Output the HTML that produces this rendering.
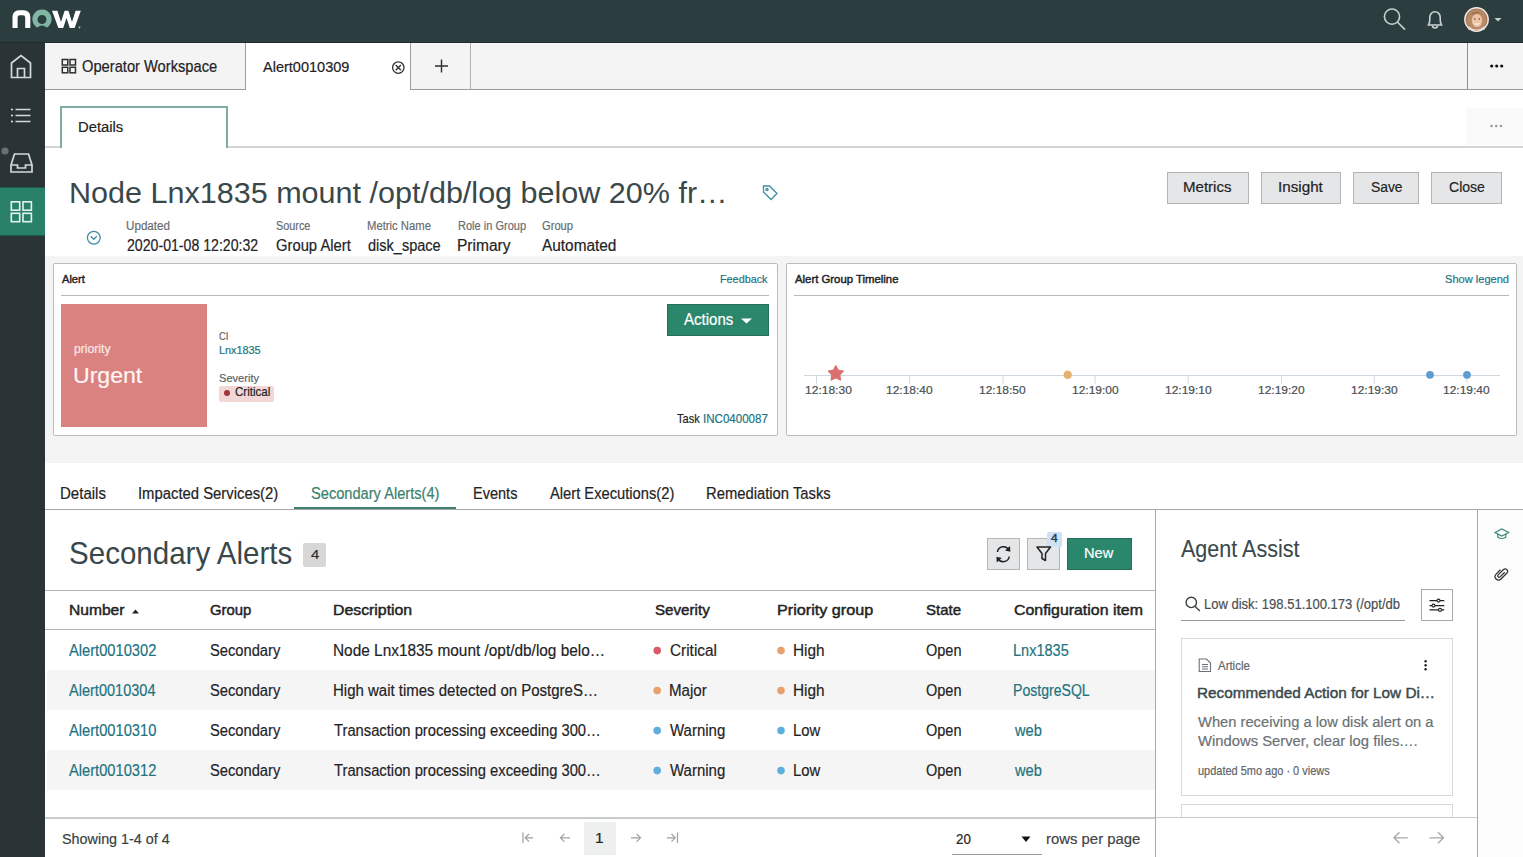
<!DOCTYPE html>
<html><head><meta charset="utf-8">
<style>
html,body{margin:0;padding:0;}
body{width:1523px;height:857px;overflow:hidden;position:relative;background:#fff;font-family:"Liberation Sans",sans-serif;}
.a{position:absolute;box-sizing:border-box;}
.t{position:absolute;white-space:nowrap;transform-origin:0 0;font-family:"Liberation Sans",sans-serif;}
svg{position:absolute;overflow:visible;}
</style></head><body>
<!-- header -->
<div class="a" style="left:0;top:0;width:1523px;height:42px;background:#2c3d3f"></div>
<div class="a" style="left:0;top:42px;width:1523px;height:1px;background:#1f2b2d"></div>
<!-- sidebar -->
<div class="a" style="left:0;top:43px;width:45px;height:814px;background:#2a3336"></div>
<div class="a" style="left:0;top:187px;width:45px;height:49px;background:#288068;border-top:1px solid #1d5a4b;border-bottom:1px solid #1d5a4b"></div>
<!-- tab bar -->
<div class="a" style="left:45px;top:43px;width:1478px;height:47px;background:#f4f4f4;border-bottom:1px solid #9a9a9a"></div>
<div class="a" style="left:245px;top:43px;width:166px;height:47px;background:#fff;border-left:1px solid #9e9e9e;border-right:1px solid #9e9e9e"></div>
<div class="a" style="left:470px;top:43px;width:1px;height:46px;background:#b0b0b0"></div>
<div class="a" style="left:1467px;top:43px;width:1px;height:46px;background:#8e8e8e"></div>
<!-- subtab -->
<div class="a" style="left:45px;top:146px;width:1478px;height:2px;background:#d4d4d4"></div>
<div class="a" style="left:60px;top:106px;width:168px;height:42px;background:#fff;border:2px solid #80aca4;border-bottom:none"></div>
<div class="a" style="left:1466px;top:108px;width:57px;height:37px;background:#fafafa"></div>
<!-- buttons -->
<div class="a" style="left:1167px;top:172px;width:82px;height:32px;background:#e4e6e7;border:1px solid #b4b4b4"></div>
<div class="a" style="left:1261px;top:172px;width:80px;height:32px;background:#e4e6e7;border:1px solid #b4b4b4"></div>
<div class="a" style="left:1353px;top:172px;width:66px;height:32px;background:#e4e6e7;border:1px solid #b4b4b4"></div>
<div class="a" style="left:1431px;top:172px;width:71px;height:32px;background:#e4e6e7;border:1px solid #b4b4b4"></div>
<!-- gray band -->
<div class="a" style="left:45px;top:256px;width:1478px;height:207px;background:#f4f4f4"></div>
<div class="a" style="left:53px;top:263px;width:725px;height:173px;background:#fff;border:1px solid #bcbcbc;border-radius:2px"></div>
<div class="a" style="left:61px;top:295px;width:708px;height:1px;background:#b9b9b9"></div>
<div class="a" style="left:786px;top:263px;width:731px;height:173px;background:#fff;border:1px solid #bcbcbc;border-radius:2px"></div>
<div class="a" style="left:794px;top:295px;width:715px;height:1px;background:#b9b9b9"></div>
<div class="a" style="left:61px;top:304px;width:146px;height:123px;background:#d9827f"></div>
<div class="a" style="left:219px;top:386px;width:55px;height:16px;background:#f3d6d6;border-radius:2px"></div>
<div class="a" style="left:224px;top:390px;width:6px;height:6px;background:#a3343a;border-radius:50%"></div>
<div class="a" style="left:667px;top:304px;width:102px;height:32px;background:#2b876c;border:1px solid #236f59"></div>
<svg style="left:0;top:0" width="1" height="1"><path d="M741 318.5 L752 318.5 L746.5 323.5 Z" fill="#fff"/></svg>
<!-- timeline -->
<div class="a" style="left:804px;top:375px;width:696px;height:1px;background:#cfd8e0"></div>
<div id="ticks"></div>
<!-- tabs row -->
<div class="a" style="left:45px;top:509px;width:1478px;height:1px;background:#a8a8a8"></div>
<div class="a" style="left:294px;top:507px;width:162px;height:2px;background:#3f7f70"></div>
<!-- panels -->
<div class="a" style="left:1155px;top:510px;width:1px;height:347px;background:#a9a9a9"></div>
<div class="a" style="left:1477px;top:510px;width:1px;height:347px;background:#a9a9a9"></div>
<div class="a" style="left:1478px;top:510px;width:45px;height:347px;background:#fcfcfc"></div>
<div class="a" style="left:303px;top:543px;width:23px;height:24px;background:#d7d7d7;border-radius:2px"></div>
<div class="a" style="left:987px;top:538px;width:33px;height:32px;background:#e4e6e7;border:1px solid #b4b4b4"></div>
<div class="a" style="left:1027px;top:538px;width:33px;height:32px;background:#e4e6e7;border:1px solid #b4b4b4"></div>
<div class="a" style="left:1047px;top:532px;width:15px;height:15px;background:#cde2f3;border-radius:2px"></div>
<div class="a" style="left:1067px;top:538px;width:65px;height:32px;background:#2b876c;border:1px solid #236f59"></div>
<!-- table -->
<div class="a" style="left:45px;top:590px;width:1110px;height:1px;background:#b5b5b5"></div>
<div class="a" style="left:45px;top:629px;width:1110px;height:1px;background:#b5b5b5"></div>
<div class="a" style="left:47px;top:670px;width:1108px;height:40px;background:#f5f5f5"></div>
<div class="a" style="left:47px;top:750px;width:1108px;height:40px;background:#f5f5f5"></div>
<svg style="left:0;top:0" width="1" height="1"><path d="M132 613.5 L139 613.5 L135.5 609.5 Z" fill="#222"/></svg>
<div id="dots"></div>
<!-- footer -->
<div class="a" style="left:45px;top:817px;width:1110px;height:2px;background:#c9cccc"></div>
<div class="a" style="left:584px;top:822px;width:32px;height:33px;background:#eef0f0"></div>
<div class="a" style="left:952px;top:854px;width:90px;height:1px;background:#9a9a9a"></div>
<svg style="left:0;top:0" width="1" height="1"><path d="M1021.5 836.5 L1030.5 836.5 L1026 842 Z" fill="#111"/></svg>
<!-- agent assist -->
<div class="a" style="left:1181px;top:620px;width:224px;height:1px;background:#9a9a9a"></div>
<div class="a" style="left:1421px;top:589px;width:32px;height:32px;background:#fff;border:1px solid #a9a9a9"></div>
<div class="a" style="left:1181px;top:638px;width:272px;height:158px;background:#fff;border:1px solid #d9d9d9"></div>
<div class="a" style="left:1181px;top:804px;width:272px;height:20px;background:#fff;border:1px solid #d9d9d9;border-bottom:none"></div>
<div class="a" style="left:1156px;top:817px;width:321px;height:40px;background:#fff;border-top:1px solid #c9cccc"></div>
<svg style="left:0;top:0" width="1523" height="857" viewBox="0 0 1523 857">
<!-- logo now -->
<g fill="#ffffff">
<path d="M12.5 28 V16.5 A6.3 6.3 0 0 1 18.8 10.2 H24 A6.3 6.3 0 0 1 30.3 16.5 V28 H25.2 V17.5 A2.2 2.2 0 0 0 23 15.3 H19.8 A2.2 2.2 0 0 0 17.6 17.5 V28 Z"/>
<path d="M52 10.8 H57.4 L61 22 L64.6 10.8 H68.4 L72 22 L75.6 10.8 H80.8 L74.6 28 H69.8 L66.5 18 L63.2 28 H58.4 Z"/>
</g>
<path fill-rule="evenodd" d="M37.4 27.6 A9.6 9.6 0 1 1 46.6 27.6 Q42 23.6 37.4 27.6 Z M42 15 A4.5 4.5 0 1 0 42 24 A4.5 4.5 0 1 0 42 15 Z" fill="#81b6a2"/>
<path d="M78.5 27 h2 M79.5 27 v1.5" stroke="#fff" stroke-width="0.6"/>
<!-- search -->
<g fill="none" stroke="#c9d1d2" stroke-width="1.6">
<circle cx="1392" cy="16.6" r="7.6"/>
<path d="M1397.6 22.2 L1405 29.6"/>
<!-- bell -->
<path d="M1428.5 25 C1429.5 23.5 1429.8 21.5 1429.8 19 V17 A5.2 5.2 0 0 1 1440.2 17 V19 C1440.2 21.5 1440.5 23.5 1441.5 25 Z"/>
<path d="M1432.5 25.5 A2.5 2.5 0 0 0 1437.5 25.5"/>
</g>
<!-- avatar -->
<circle cx="1476.5" cy="19.5" r="12.4" fill="#f2ece8"/>
<circle cx="1476.5" cy="19.5" r="10.9" fill="#a8795a"/>
<path d="M1467 22 Q1466 10 1476.5 9.5 Q1487 10 1486 22 Q1484 28 1476.5 30 Q1469 28 1467 22Z" fill="#b98a66"/>
<ellipse cx="1477" cy="20.5" rx="5.2" ry="6.6" fill="#eec3a8"/>
<path d="M1470 15.5 Q1476 9 1483.5 15 Q1480 12.5 1476.5 13 Q1472.5 13 1470 15.5Z" fill="#8e5e40"/>
<path d="M1468.5 26 Q1476.5 33 1484.5 26 L1484.5 30 L1468.5 30Z" fill="#e9d8cf"/>
<circle cx="1474.8" cy="19" r="0.7" fill="#4a2a1a"/><circle cx="1479.2" cy="19" r="0.7" fill="#4a2a1a"/>
<path d="M1474.5 23.5 Q1477 25.2 1479.5 23.5" stroke="#fff" stroke-width="1" fill="none"/>
<path d="M1494.5 18 L1501.5 18 L1498 21.5 Z" fill="#c9d1d2"/>
<!-- sidebar icons -->
<g fill="none" stroke="#d4d9da" stroke-width="1.7">
<path d="M11.5 77.5 V63 L21 55.5 L30.5 63 V77.5 Z"/>
<path d="M17.5 77.5 V68.5 H24.5 V77.5"/>
<path d="M15.5 109.5 H30.5 M15.5 115.5 H30.5 M15.5 121.5 H30.5"/>
<path d="M11 165 L14.5 154 H28.5 L32 165 V172 H11 Z M11 165 H17.5 V168 H25.5 V165 H32"/>
</g>
<g fill="#d4d9da"><circle cx="12" cy="109.5" r="1.1"/><circle cx="12" cy="115.5" r="1.1"/><circle cx="12" cy="121.5" r="1.1"/></g>
<circle cx="5" cy="151" r="3.6" fill="#6a6f71"/>
<g fill="none" stroke="#e3f3ee" stroke-width="1.6">
<rect x="11.3" y="201.8" width="8.4" height="8.4"/><rect x="23" y="201.8" width="8.4" height="8.4"/>
<rect x="11.3" y="213.3" width="8.4" height="8.4"/><rect x="23" y="213.3" width="8.4" height="8.4"/>
</g>
<!-- tab grid icon -->
<g fill="none" stroke="#2b2f31" stroke-width="1.5">
<rect x="62.3" y="59.5" width="5.5" height="5.5"/><rect x="70" y="59.5" width="5.5" height="5.5"/>
<rect x="62.3" y="67.3" width="5.5" height="5.5"/><rect x="70" y="67.3" width="5.5" height="5.5"/>
</g>
<!-- close circle x -->
<g fill="none" stroke="#2b2f31" stroke-width="1.3">
<circle cx="398.3" cy="67.6" r="5.7"/>
<path d="M395.7 65 L400.9 70.2 M400.9 65 L395.7 70.2"/>
<!-- plus -->
<path d="M441.5 59.5 V72.5 M435 66 H448" stroke-width="1.4"/>
</g>
<g fill="#111"><circle cx="1491.7" cy="66" r="1.6"/><circle cx="1496.7" cy="66" r="1.6"/><circle cx="1501.7" cy="66" r="1.6"/></g>
<g fill="#9a9a9a"><circle cx="1491.5" cy="126" r="1.3"/><circle cx="1496.2" cy="126" r="1.3"/><circle cx="1500.9" cy="126" r="1.3"/></g>
<!-- chevron circle -->
<g fill="none" stroke="#3c8ea0" stroke-width="1.3">
<circle cx="93.8" cy="237.8" r="6.4"/>
<path d="M90.8 236.3 L93.8 239.3 L96.8 236.3"/>
<!-- tag -->
<path d="M763.5 186 H769.5 L777 193.5 L771 199.5 L763.5 192 Z"/>
<circle cx="767" cy="189.5" r="1.1"/>
</g>
<!-- timeline ticks -->
<g stroke="#cfd8e0" stroke-width="1">
<path d="M816.5 375 V383.5 M909.7 375 V383.5 M1003 375 V383.5 M1095.1 375 V383.5 M1188.2 375 V383.5 M1281.6 375 V383.5 M1374.3 375 V383.5 M1467 375 V383.5"/>
</g>
<path d="M835.80 365.40 L838.33 370.12 L843.60 371.07 L839.89 374.93 L840.62 380.23 L835.80 377.90 L830.98 380.23 L831.71 374.93 L828.00 371.07 L833.27 370.12 Z" fill="#d9706e" stroke="#d9706e" stroke-width="1" stroke-linejoin="round"/>
<circle cx="1067.7" cy="374.8" r="4.2" fill="#e6b26f"/>
<circle cx="1430" cy="374.8" r="3.9" fill="#5e9dd2"/>
<circle cx="1467" cy="374.8" r="3.9" fill="#5e9dd2"/>
<!-- refresh icon -->
<g fill="none" stroke="#222" stroke-width="1.5">
<path d="M997.5 552 A6 6 0 0 1 1008.8 550"/>
<path d="M1009.2 556.5 A6 6 0 0 1 998 558.6"/>
</g>
<path d="M1010 546 L1010.4 551.8 L1005 550.6 Z" fill="#222"/>
<path d="M996.8 562.6 L996.4 556.8 L1001.8 558 Z" fill="#222"/>
<!-- filter -->
<path d="M1037 547 H1050.5 L1045.5 553.5 V560.5 L1042 558.5 V553.5 Z" fill="none" stroke="#222" stroke-width="1.5" stroke-linejoin="round"/>
<!-- table dots -->
<g>
<circle cx="657.2" cy="650.6" r="3.8" fill="#d95a68"/>
<circle cx="657.2" cy="690.6" r="3.8" fill="#e8a06c"/>
<circle cx="657.2" cy="730.6" r="3.8" fill="#5eaede"/>
<circle cx="657.2" cy="770.6" r="3.8" fill="#5eaede"/>
<circle cx="781" cy="650.6" r="3.8" fill="#e8a06c"/>
<circle cx="781" cy="690.6" r="3.8" fill="#e8a06c"/>
<circle cx="781" cy="730.6" r="3.8" fill="#5eaede"/>
<circle cx="781" cy="770.6" r="3.8" fill="#5eaede"/>
</g>
<!-- pagination arrows -->
<g fill="none" stroke="#9ba0a3" stroke-width="1.2">
<path d="M523 832.5 V843 M533 837.8 H525.5 M529 834 L525.3 837.8 L529 841.6"/>
<path d="M570 837.8 H560.5 M564.5 833.8 L560.5 837.8 L564.5 841.8"/>
<path d="M631 837.8 H640.5 M636.5 833.8 L640.5 837.8 L636.5 841.8"/>
<path d="M677.5 832.5 V843 M667 837.8 H675 M671.5 834 L675.2 837.8 L671.5 841.6"/>
</g>
<!-- agent assist search -->
<g fill="none" stroke="#3a3f42" stroke-width="1.4">
<circle cx="1191.3" cy="602.4" r="5.2"/>
<path d="M1195 606.2 L1199.8 611"/>
</g>
<g fill="none" stroke="#222" stroke-width="1.3">
<path d="M1429.5 600.6 H1444.3 M1429.5 605.6 H1444.3 M1429.5 609.9 H1444.3"/>
</g>
<g fill="#fff" stroke="#222" stroke-width="1.1">
<circle cx="1438.5" cy="600.6" r="1.5"/><circle cx="1433.5" cy="605.6" r="1.5"/><circle cx="1440" cy="609.9" r="1.5"/>
</g>
<!-- doc icon -->
<g fill="none" stroke="#6b7174" stroke-width="1.1">
<path d="M1199.2 659 H1206.5 L1210.5 663 V671.5 H1199.2 Z"/>
<path d="M1202 664.5 H1208 M1202 666.8 H1208 M1202 669 H1208"/>
</g>
<g fill="#222"><circle cx="1425.6" cy="661.2" r="1.2"/><circle cx="1425.6" cy="665.2" r="1.2"/><circle cx="1425.6" cy="669.2" r="1.2"/></g>
<!-- agent assist arrows -->
<g fill="none" stroke="#a3a7aa" stroke-width="1.3">
<path d="M1407.8 837.8 H1394 M1399.5 832.3 L1394 837.8 L1399.5 843.3"/>
<path d="M1429.5 837.8 H1443.5 M1438 832.3 L1443.5 837.8 L1438 843.3"/>
</g>
<!-- grad cap -->
<g fill="none" stroke="#3a8a7a" stroke-width="1.2">
<path d="M1495 532.5 L1501.8 529 L1508.6 532.5 L1501.8 536 Z"/>
<path d="M1497.8 534 V537.2 Q1501.8 539.8 1505.8 537.2 V534"/>
</g>
<!-- paperclip -->
<path d="M1505.5 569.5 L1499 576 A1.9 1.9 0 0 1 1496.3 573.3 L1503.8 565.8 A3.4 3.4 0 0 1 1508.6 570.6 L1500.3 578.9 A4.8 4.8 0 0 1 1493.5 572.1 L1499.5 566.1" fill="none" stroke="#2b2f31" transform="translate(1501.5 574) scale(0.72) translate(-1501 -572)" stroke-width="1.7"/>
</svg>

<span class="t" id="t0" style="left:81.60px;top:56.8px;font-size:15.75px;line-height:19px;color:#1f2325;font-weight:normal;transform:scaleX(0.9321);-webkit-text-stroke:0.2px #1f2325">Operator Workspace</span>
<span class="t" id="t1" style="left:262.80px;top:57.5px;font-size:15.25px;line-height:18px;color:#1f2325;font-weight:normal;transform:scaleX(0.9519);-webkit-text-stroke:0.2px #1f2325">Alert0010309</span>
<span class="t" id="t2" style="left:77.53px;top:117.5px;font-size:15.25px;line-height:18px;color:#1f2325;font-weight:normal;transform:scaleX(0.9698);-webkit-text-stroke:0.2px #1f2325">Details</span>
<span class="t" id="t3" style="left:68.75px;top:174.5px;font-size:29.75px;line-height:36px;color:#3a484b;font-weight:normal;transform:scaleX(1.0264);-webkit-text-stroke:0px #3a484b">Node Lnx1835 mount /opt/db/log below 20% fr…</span>
<span class="t" id="t4" style="left:126.32px;top:218.3px;font-size:13.25px;line-height:16px;color:#676d70;font-weight:normal;transform:scaleX(0.8784);-webkit-text-stroke:0.2px #676d70">Updated</span>
<span class="t" id="t5" style="left:275.50px;top:218.3px;font-size:13.25px;line-height:16px;color:#676d70;font-weight:normal;transform:scaleX(0.8195);-webkit-text-stroke:0.2px #676d70">Source</span>
<span class="t" id="t6" style="left:367.15px;top:218.3px;font-size:13.25px;line-height:16px;color:#676d70;font-weight:normal;transform:scaleX(0.8518);-webkit-text-stroke:0.2px #676d70">Metric Name</span>
<span class="t" id="t7" style="left:457.57px;top:218.3px;font-size:13.25px;line-height:16px;color:#676d70;font-weight:normal;transform:scaleX(0.8323);-webkit-text-stroke:0.2px #676d70">Role in Group</span>
<span class="t" id="t8" style="left:541.80px;top:218.3px;font-size:13.25px;line-height:16px;color:#676d70;font-weight:normal;transform:scaleX(0.8421);-webkit-text-stroke:0.2px #676d70">Group</span>
<span class="t" id="t9" style="left:127.20px;top:236.0px;font-size:16.0px;line-height:19px;color:#1f2325;font-weight:normal;transform:scaleX(0.8832);-webkit-text-stroke:0.2px #1f2325">2020-01-08 12:20:32</span>
<span class="t" id="t10" style="left:275.50px;top:236.0px;font-size:16.0px;line-height:19px;color:#1f2325;font-weight:normal;transform:scaleX(0.9239);-webkit-text-stroke:0.2px #1f2325">Group Alert</span>
<span class="t" id="t11" style="left:368.00px;top:236.0px;font-size:16.0px;line-height:19px;color:#1f2325;font-weight:normal;transform:scaleX(0.9083);-webkit-text-stroke:0.2px #1f2325">disk_space</span>
<span class="t" id="t12" style="left:457.43px;top:236.0px;font-size:16.0px;line-height:19px;color:#1f2325;font-weight:normal;transform:scaleX(0.9703);-webkit-text-stroke:0.2px #1f2325">Primary</span>
<span class="t" id="t13" style="left:541.80px;top:236.0px;font-size:16.0px;line-height:19px;color:#1f2325;font-weight:normal;transform:scaleX(0.9610);-webkit-text-stroke:0.2px #1f2325">Automated</span>
<span class="t" id="t14" style="left:1183.21px;top:177.7px;font-size:15.25px;line-height:18px;color:#1f2325;font-weight:normal;transform:scaleX(0.9874);-webkit-text-stroke:0.2px #1f2325">Metrics</span>
<span class="t" id="t15" style="left:1278.40px;top:177.7px;font-size:15.25px;line-height:18px;color:#1f2325;font-weight:normal;transform:scaleX(0.9979);-webkit-text-stroke:0.2px #1f2325">Insight</span>
<span class="t" id="t16" style="left:1370.80px;top:177.7px;font-size:15.25px;line-height:18px;color:#1f2325;font-weight:normal;transform:scaleX(0.9073);-webkit-text-stroke:0.2px #1f2325">Save</span>
<span class="t" id="t17" style="left:1448.80px;top:177.7px;font-size:15.25px;line-height:18px;color:#1f2325;font-weight:normal;transform:scaleX(0.9219);-webkit-text-stroke:0.2px #1f2325">Close</span>
<span class="t" id="t18" style="left:62.00px;top:272.2px;font-size:11.5px;line-height:14px;color:#1f2325;font-weight:normal;transform:scaleX(0.9652);-webkit-text-stroke:0.45px #1f2325">Alert</span>
<span class="t" id="t19" style="left:720.40px;top:272.0px;font-size:11.75px;line-height:14px;color:#21737f;font-weight:normal;transform:scaleX(0.9202);-webkit-text-stroke:0.2px #21737f">Feedback</span>
<span class="t" id="t20" style="left:794.60px;top:272.2px;font-size:11.25px;line-height:14px;color:#1f2325;font-weight:normal;transform:scaleX(1.0089);-webkit-text-stroke:0.45px #1f2325">Alert Group Timeline</span>
<span class="t" id="t21" style="left:1444.70px;top:272.0px;font-size:11.75px;line-height:14px;color:#21737f;font-weight:normal;transform:scaleX(0.9420);-webkit-text-stroke:0.2px #21737f">Show legend</span>
<span class="t" id="t22" style="left:73.70px;top:341.6px;font-size:12.5px;line-height:15px;color:#fbe9e8;font-weight:normal;transform:scaleX(0.9724);-webkit-text-stroke:0.2px #fbe9e8">priority</span>
<span class="t" id="t23" style="left:72.67px;top:362.0px;font-size:22.5px;line-height:27px;color:#fff5f4;font-weight:normal;transform:scaleX(1.0255);-webkit-text-stroke:0.2px #fff5f4">Urgent</span>
<span class="t" id="t24" style="left:219.20px;top:329.5px;font-size:11.0px;line-height:13px;color:#5f6467;font-weight:normal;transform:scaleX(0.8498);-webkit-text-stroke:0.2px #5f6467">CI</span>
<span class="t" id="t25" style="left:219.20px;top:343.9px;font-size:11.0px;line-height:13px;color:#21737f;font-weight:normal;transform:scaleX(0.9860);-webkit-text-stroke:0.2px #21737f">Lnx1835</span>
<span class="t" id="t26" style="left:219.20px;top:370.6px;font-size:11.5px;line-height:14px;color:#5f6467;font-weight:normal;transform:scaleX(0.9643);-webkit-text-stroke:0.2px #5f6467">Severity</span>
<span class="t" id="t27" style="left:235.30px;top:385.3px;font-size:12.25px;line-height:15px;color:#1f2325;font-weight:normal;transform:scaleX(0.9452);-webkit-text-stroke:0.2px #1f2325">Critical</span>
<span class="t" id="t28" style="left:683.60px;top:310.1px;font-size:15.75px;line-height:19px;color:#ffffff;font-weight:normal;transform:scaleX(0.9541);-webkit-text-stroke:0.2px #ffffff">Actions</span>
<span class="t" id="t29" style="left:677.30px;top:410.9px;font-size:13.0px;line-height:16px;color:#1f2325;font-weight:normal;transform:scaleX(0.8483);-webkit-text-stroke:0.2px #1f2325">Task</span>
<span class="t" id="t30" style="left:703.31px;top:410.9px;font-size:13.0px;line-height:16px;color:#21737f;font-weight:normal;transform:scaleX(0.8890);-webkit-text-stroke:0.2px #21737f">INC0400087</span>
<span class="t" id="t31" style="left:805.10px;top:383.4px;font-size:11.75px;line-height:14px;color:#4a4f52;font-weight:normal;transform:scaleX(1.0237);-webkit-text-stroke:0.2px #4a4f52">12:18:30</span>
<span class="t" id="t32" style="left:886.10px;top:383.4px;font-size:11.75px;line-height:14px;color:#4a4f52;font-weight:normal;transform:scaleX(1.0216);-webkit-text-stroke:0.2px #4a4f52">12:18:40</span>
<span class="t" id="t33" style="left:979.40px;top:383.4px;font-size:11.75px;line-height:14px;color:#4a4f52;font-weight:normal;transform:scaleX(1.0216);-webkit-text-stroke:0.2px #4a4f52">12:18:50</span>
<span class="t" id="t34" style="left:1071.50px;top:383.4px;font-size:11.75px;line-height:14px;color:#4a4f52;font-weight:normal;transform:scaleX(1.0216);-webkit-text-stroke:0.2px #4a4f52">12:19:00</span>
<span class="t" id="t35" style="left:1164.60px;top:383.4px;font-size:11.75px;line-height:14px;color:#4a4f52;font-weight:normal;transform:scaleX(1.0216);-webkit-text-stroke:0.2px #4a4f52">12:19:10</span>
<span class="t" id="t36" style="left:1258.00px;top:383.4px;font-size:11.75px;line-height:14px;color:#4a4f52;font-weight:normal;transform:scaleX(1.0216);-webkit-text-stroke:0.2px #4a4f52">12:19:20</span>
<span class="t" id="t37" style="left:1350.70px;top:383.4px;font-size:11.75px;line-height:14px;color:#4a4f52;font-weight:normal;transform:scaleX(1.0216);-webkit-text-stroke:0.2px #4a4f52">12:19:30</span>
<span class="t" id="t38" style="left:1443.40px;top:383.4px;font-size:11.75px;line-height:14px;color:#4a4f52;font-weight:normal;transform:scaleX(1.0216);-webkit-text-stroke:0.2px #4a4f52">12:19:40</span>
<span class="t" id="t39" style="left:60.38px;top:482.7px;font-size:16.25px;line-height:20px;color:#1f2325;font-weight:normal;transform:scaleX(0.9249);-webkit-text-stroke:0.2px #1f2325">Details</span>
<span class="t" id="t40" style="left:137.79px;top:482.7px;font-size:16.25px;line-height:20px;color:#1f2325;font-weight:normal;transform:scaleX(0.9131);-webkit-text-stroke:0.2px #1f2325">Impacted Services(2)</span>
<span class="t" id="t41" style="left:310.90px;top:482.7px;font-size:16.25px;line-height:20px;color:#3b7f6e;font-weight:normal;transform:scaleX(0.9002);-webkit-text-stroke:0.2px #3b7f6e">Secondary Alerts(4)</span>
<span class="t" id="t42" style="left:472.61px;top:482.7px;font-size:16.25px;line-height:20px;color:#1f2325;font-weight:normal;transform:scaleX(0.8939);-webkit-text-stroke:0.2px #1f2325">Events</span>
<span class="t" id="t43" style="left:549.50px;top:482.7px;font-size:16.25px;line-height:20px;color:#1f2325;font-weight:normal;transform:scaleX(0.9053);-webkit-text-stroke:0.2px #1f2325">Alert Executions(2)</span>
<span class="t" id="t44" style="left:706.09px;top:482.7px;font-size:16.25px;line-height:20px;color:#1f2325;font-weight:normal;transform:scaleX(0.9107);-webkit-text-stroke:0.2px #1f2325">Remediation Tasks</span>
<span class="t" id="t45" style="left:69.25px;top:534.8px;font-size:31.25px;line-height:38px;color:#3a484b;font-weight:normal;transform:scaleX(0.9453);-webkit-text-stroke:0px #3a484b">Secondary Alerts</span>
<span class="t" id="t46" style="left:310.50px;top:547.0px;font-size:13.0px;line-height:16px;color:#2b2b2b;font-weight:normal;transform:scaleX(1.1429);-webkit-text-stroke:0.2px #2b2b2b">4</span>
<span class="t" id="t47" style="left:1084.26px;top:543.2px;font-size:15.5px;line-height:19px;color:#ffffff;font-weight:normal;transform:scaleX(0.9411);-webkit-text-stroke:0.2px #ffffff">New</span>
<span class="t" id="t48" style="left:1051.00px;top:532.2px;font-size:11.0px;line-height:13px;color:#1d3f66;font-weight:normal;transform:scaleX(1.0833);-webkit-text-stroke:0.45px #1d3f66">4</span>
<span class="t" id="t49" style="left:69.12px;top:601.9px;font-size:14.5px;line-height:17px;color:#1f2325;font-weight:normal;transform:scaleX(1.0760);-webkit-text-stroke:0.45px #1f2325">Number</span>
<span class="t" id="t50" style="left:210.10px;top:601.9px;font-size:14.5px;line-height:17px;color:#1f2325;font-weight:normal;transform:scaleX(1.0265);-webkit-text-stroke:0.45px #1f2325">Group</span>
<span class="t" id="t51" style="left:332.81px;top:601.9px;font-size:14.5px;line-height:17px;color:#1f2325;font-weight:normal;transform:scaleX(1.0915);-webkit-text-stroke:0.45px #1f2325">Description</span>
<span class="t" id="t52" style="left:654.50px;top:601.9px;font-size:14.5px;line-height:17px;color:#1f2325;font-weight:normal;transform:scaleX(1.0446);-webkit-text-stroke:0.45px #1f2325">Severity</span>
<span class="t" id="t53" style="left:776.78px;top:601.9px;font-size:14.5px;line-height:17px;color:#1f2325;font-weight:normal;transform:scaleX(1.1155);-webkit-text-stroke:0.45px #1f2325">Priority group</span>
<span class="t" id="t54" style="left:926.00px;top:601.9px;font-size:14.5px;line-height:17px;color:#1f2325;font-weight:normal;transform:scaleX(1.0328);-webkit-text-stroke:0.45px #1f2325">State</span>
<span class="t" id="t55" style="left:1014.20px;top:601.9px;font-size:14.5px;line-height:17px;color:#1f2325;font-weight:normal;transform:scaleX(1.0953);-webkit-text-stroke:0.45px #1f2325">Configuration item</span>
<span class="t" id="t56" style="left:69.00px;top:639.7px;font-size:17.25px;line-height:21px;color:#21737f;font-weight:normal;transform:scaleX(0.8507);-webkit-text-stroke:0.2px #21737f">Alert0010302</span>
<span class="t" id="t57" style="left:209.70px;top:639.7px;font-size:17.25px;line-height:21px;color:#1f2325;font-weight:normal;transform:scaleX(0.8522);-webkit-text-stroke:0.2px #1f2325">Secondary</span>
<span class="t" id="t58" style="left:333.01px;top:639.7px;font-size:17.25px;line-height:21px;color:#1f2325;font-weight:normal;transform:scaleX(0.8926);-webkit-text-stroke:0.2px #1f2325">Node Lnx1835 mount /opt/db/log belo…</span>
<span class="t" id="t59" style="left:670.30px;top:639.7px;font-size:17.25px;line-height:21px;color:#1f2325;font-weight:normal;transform:scaleX(0.8906);-webkit-text-stroke:0.2px #1f2325">Critical</span>
<span class="t" id="t60" style="left:792.71px;top:639.7px;font-size:17.25px;line-height:21px;color:#1f2325;font-weight:normal;transform:scaleX(0.8913);-webkit-text-stroke:0.2px #1f2325">High</span>
<span class="t" id="t61" style="left:926.00px;top:639.7px;font-size:17.25px;line-height:21px;color:#1f2325;font-weight:normal;transform:scaleX(0.8412);-webkit-text-stroke:0.2px #1f2325">Open</span>
<span class="t" id="t62" style="left:1013.36px;top:639.7px;font-size:17.25px;line-height:21px;color:#21737f;font-weight:normal;transform:scaleX(0.8422);-webkit-text-stroke:0.2px #21737f">Lnx1835</span>
<span class="t" id="t63" style="left:69.00px;top:679.7px;font-size:17.25px;line-height:21px;color:#21737f;font-weight:normal;transform:scaleX(0.8425);-webkit-text-stroke:0.2px #21737f">Alert0010304</span>
<span class="t" id="t64" style="left:209.70px;top:679.7px;font-size:17.25px;line-height:21px;color:#1f2325;font-weight:normal;transform:scaleX(0.8522);-webkit-text-stroke:0.2px #1f2325">Secondary</span>
<span class="t" id="t65" style="left:333.03px;top:679.7px;font-size:17.25px;line-height:21px;color:#1f2325;font-weight:normal;transform:scaleX(0.8689);-webkit-text-stroke:0.2px #1f2325">High wait times detected on PostgreS…</span>
<span class="t" id="t66" style="left:669.42px;top:679.7px;font-size:17.25px;line-height:21px;color:#1f2325;font-weight:normal;transform:scaleX(0.8752);-webkit-text-stroke:0.2px #1f2325">Major</span>
<span class="t" id="t67" style="left:792.71px;top:679.7px;font-size:17.25px;line-height:21px;color:#1f2325;font-weight:normal;transform:scaleX(0.8913);-webkit-text-stroke:0.2px #1f2325">High</span>
<span class="t" id="t68" style="left:926.00px;top:679.7px;font-size:17.25px;line-height:21px;color:#1f2325;font-weight:normal;transform:scaleX(0.8412);-webkit-text-stroke:0.2px #1f2325">Open</span>
<span class="t" id="t69" style="left:1013.38px;top:679.7px;font-size:17.25px;line-height:21px;color:#21737f;font-weight:normal;transform:scaleX(0.8161);-webkit-text-stroke:0.2px #21737f">PostgreSQL</span>
<span class="t" id="t70" style="left:69.00px;top:719.7px;font-size:17.25px;line-height:21px;color:#21737f;font-weight:normal;transform:scaleX(0.8507);-webkit-text-stroke:0.2px #21737f">Alert0010310</span>
<span class="t" id="t71" style="left:209.70px;top:719.7px;font-size:17.25px;line-height:21px;color:#1f2325;font-weight:normal;transform:scaleX(0.8522);-webkit-text-stroke:0.2px #1f2325">Secondary</span>
<span class="t" id="t72" style="left:333.90px;top:719.7px;font-size:17.25px;line-height:21px;color:#1f2325;font-weight:normal;transform:scaleX(0.8553);-webkit-text-stroke:0.2px #1f2325">Transaction processing exceeding 300…</span>
<span class="t" id="t73" style="left:670.30px;top:719.7px;font-size:17.25px;line-height:21px;color:#1f2325;font-weight:normal;transform:scaleX(0.8683);-webkit-text-stroke:0.2px #1f2325">Warning</span>
<span class="t" id="t74" style="left:792.74px;top:719.7px;font-size:17.25px;line-height:21px;color:#1f2325;font-weight:normal;transform:scaleX(0.8593);-webkit-text-stroke:0.2px #1f2325">Low</span>
<span class="t" id="t75" style="left:926.00px;top:719.7px;font-size:17.25px;line-height:21px;color:#1f2325;font-weight:normal;transform:scaleX(0.8412);-webkit-text-stroke:0.2px #1f2325">Open</span>
<span class="t" id="t76" style="left:1015.05px;top:719.7px;font-size:17.25px;line-height:21px;color:#21737f;font-weight:normal;transform:scaleX(0.8486);-webkit-text-stroke:0.2px #21737f">web</span>
<span class="t" id="t77" style="left:69.00px;top:759.7px;font-size:17.25px;line-height:21px;color:#21737f;font-weight:normal;transform:scaleX(0.8507);-webkit-text-stroke:0.2px #21737f">Alert0010312</span>
<span class="t" id="t78" style="left:209.70px;top:759.7px;font-size:17.25px;line-height:21px;color:#1f2325;font-weight:normal;transform:scaleX(0.8522);-webkit-text-stroke:0.2px #1f2325">Secondary</span>
<span class="t" id="t79" style="left:333.90px;top:759.7px;font-size:17.25px;line-height:21px;color:#1f2325;font-weight:normal;transform:scaleX(0.8553);-webkit-text-stroke:0.2px #1f2325">Transaction processing exceeding 300…</span>
<span class="t" id="t80" style="left:670.30px;top:759.7px;font-size:17.25px;line-height:21px;color:#1f2325;font-weight:normal;transform:scaleX(0.8683);-webkit-text-stroke:0.2px #1f2325">Warning</span>
<span class="t" id="t81" style="left:792.74px;top:759.7px;font-size:17.25px;line-height:21px;color:#1f2325;font-weight:normal;transform:scaleX(0.8593);-webkit-text-stroke:0.2px #1f2325">Low</span>
<span class="t" id="t82" style="left:926.00px;top:759.7px;font-size:17.25px;line-height:21px;color:#1f2325;font-weight:normal;transform:scaleX(0.8412);-webkit-text-stroke:0.2px #1f2325">Open</span>
<span class="t" id="t83" style="left:1015.05px;top:759.7px;font-size:17.25px;line-height:21px;color:#21737f;font-weight:normal;transform:scaleX(0.8486);-webkit-text-stroke:0.2px #21737f">web</span>
<span class="t" id="t84" style="left:61.70px;top:829.5px;font-size:15.25px;line-height:18px;color:#3a3f42;font-weight:normal;transform:scaleX(0.9420);-webkit-text-stroke:0.2px #3a3f42">Showing 1-4 of 4</span>
<span class="t" id="t85" style="left:594.93px;top:830.0px;font-size:14.5px;line-height:17px;color:#1f2325;font-weight:normal;transform:scaleX(1.0714);-webkit-text-stroke:0.2px #1f2325">1</span>
<span class="t" id="t86" style="left:955.90px;top:828.9px;font-size:15.5px;line-height:19px;color:#1f2325;font-weight:normal;transform:scaleX(0.8570);-webkit-text-stroke:0.2px #1f2325">20</span>
<span class="t" id="t87" style="left:1045.64px;top:828.9px;font-size:15.5px;line-height:19px;color:#3f4447;font-weight:normal;transform:scaleX(0.9606);-webkit-text-stroke:0.2px #3f4447">rows per page</span>
<span class="t" id="t88" style="left:1180.70px;top:535.0px;font-size:23.0px;line-height:28px;color:#3a484b;font-weight:normal;transform:scaleX(0.9358);-webkit-text-stroke:0.1px #3a484b">Agent Assist</span>
<span class="t" id="t89" style="left:1204.19px;top:595.9px;font-size:14.25px;line-height:17px;color:#4a4f52;font-weight:normal;transform:scaleX(0.9131);-webkit-text-stroke:0.2px #4a4f52">Low disk: 198.51.100.173 (/opt/db</span>
<span class="t" id="t90" style="left:1217.70px;top:657.8px;font-size:12.75px;line-height:15px;color:#5f6467;font-weight:normal;transform:scaleX(0.8972);-webkit-text-stroke:0.2px #5f6467">Article</span>
<span class="t" id="t91" style="left:1197.31px;top:683.4px;font-size:15.5px;line-height:19px;color:#3a484b;font-weight:normal;transform:scaleX(0.9872);-webkit-text-stroke:0.45px #3a484b">Recommended Action for Low Di…</span>
<span class="t" id="t92" style="left:1198.30px;top:711.7px;font-size:15.5px;line-height:19px;color:#6b7174;font-weight:normal;transform:scaleX(0.9493);-webkit-text-stroke:0.2px #6b7174">When receiving a low disk alert on a</span>
<span class="t" id="t93" style="left:1198.30px;top:732.2px;font-size:15.25px;line-height:18px;color:#6b7174;font-weight:normal;transform:scaleX(0.9704);-webkit-text-stroke:0.2px #6b7174">Windows Server, clear log files.…</span>
<span class="t" id="t94" style="left:1198.30px;top:763.2px;font-size:12.75px;line-height:15px;color:#5f6467;font-weight:normal;transform:scaleX(0.8598);-webkit-text-stroke:0.2px #5f6467">updated 5mo ago · 0 views</span>
</body></html>
